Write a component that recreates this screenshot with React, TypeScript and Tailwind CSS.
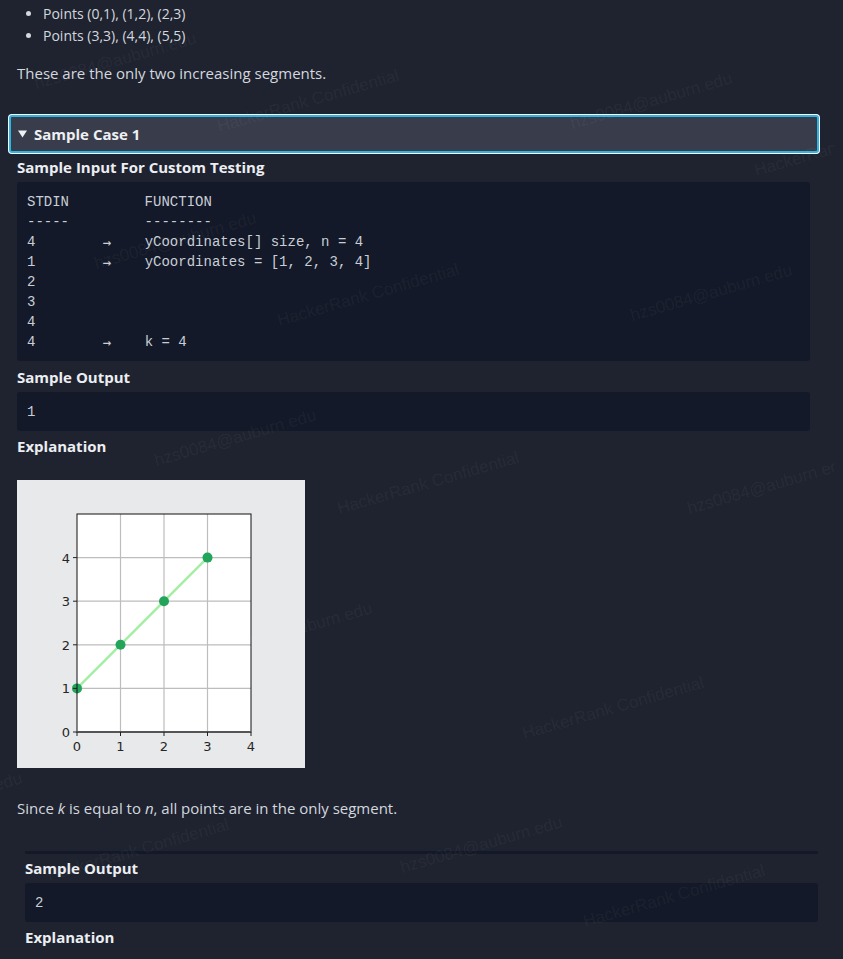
import React from "react";

function Plot() {
  const x0 = 60;
  const y0 = 252;
  const ux = 43.5;
  const uy = 43.6;
  const X = (v: number) => x0 + v * ux;
  const Y = (v: number) => y0 - v * uy;
  const pts = [
    [0, 1],
    [1, 2],
    [2, 3],
    [3, 4],
  ];
  return (
    <svg width="288" height="288" viewBox="0 0 288 288" className="block">
      <rect x="0" y="0" width="288" height="288" fill="#e8e9eb" />
      <rect x={X(0)} y={Y(5)} width={4 * ux} height={5 * uy} fill="#ffffff" />
      {[1, 2, 3].map((i) => (
        <line key={"gx" + i} x1={X(i)} y1={Y(0)} x2={X(i)} y2={Y(5)} stroke="#bdbdbd" strokeWidth="1.2" />
      ))}
      {[1, 2, 3, 4].map((j) => (
        <line key={"gy" + j} x1={X(0)} y1={Y(j)} x2={X(4)} y2={Y(j)} stroke="#bdbdbd" strokeWidth="1.2" />
      ))}
      <line x1={X(0)} y1={Y(1)} x2={X(3)} y2={Y(4)} stroke="#a3eea3" strokeWidth="2.4" />
      {pts.map(([a, b]) => (
        <circle key={"p" + a} cx={X(a)} cy={Y(b)} r="5" fill="#22a45a" />
      ))}
      <rect x={X(0)} y={Y(5)} width={4 * ux} height={5 * uy} fill="none" stroke="#111111" strokeWidth="1" />
      <line x1={X(0)} y1={Y(0)} x2={X(4)} y2={Y(0)} stroke="#555555" strokeWidth="1.8" />
      {[0, 1, 2, 3, 4].map((i) => (
        <g key={"tx" + i}>
          <line x1={X(i)} y1={Y(0)} x2={X(i)} y2={Y(0) + 4} stroke="#222" strokeWidth="1" />
          <text x={X(i)} y={Y(0) + 19} textAnchor="middle" fontFamily="DejaVu Sans, sans-serif" fontSize="13" fill="#262626">
            {i}
          </text>
        </g>
      ))}
      {[0, 1, 2, 3, 4].map((j) => (
        <g key={"ty" + j}>
          <line x1={X(0) - 4} y1={Y(j)} x2={X(0)} y2={Y(j)} stroke="#222" strokeWidth="1" />
          <text x={X(0) - 7} y={Y(j) + 5} textAnchor="end" fontFamily="DejaVu Sans, sans-serif" fontSize="13" fill="#262626">
            {j}
          </text>
        </g>
      ))}
    </svg>
  );
}

function Watermarks() {
  const wm =
    "absolute origin-bottom-left -rotate-[16deg] whitespace-nowrap font-['Liberation_Sans',Arial,sans-serif] text-[17px] leading-none text-white/[0.055]";
  const email = "hzs0084@auburn.edu";
  const conf = "HackerRank Confidential";
  return (
    <div className="pointer-events-none absolute left-0 top-0 h-full w-[834px] overflow-hidden">
      <span className={wm + " left-[37px] top-[75px]"}>{email}</span>
      <span className={wm + " left-[220px] top-[118px]"}>{conf}</span>
      <span className={wm + " left-[573px] top-[115px]"}>{email}</span>
      <span className={wm + " left-[757px] top-[162px]"}>{conf}</span>
      <span className={wm + " left-[97px] top-[255px]"}>{email}</span>
      <span className={wm + " left-[280px] top-[312px]"}>{conf}</span>
      <span className={wm + " left-[633px] top-[307px]"}>{email}</span>
      <span className={wm + " left-[157px] top-[452px]"}>{email}</span>
      <span className={wm + " left-[340px] top-[500px]"}>{conf}</span>
      <span className={wm + " left-[690px] top-[500px]"}>{email}</span>
      <span className={wm + " left-[213px] top-[645px]"}>{email}</span>
      <span className={wm + " left-[525px] top-[725px]"}>{conf}</span>
      <span className={wm + " left-[-137px] top-[815px]"}>{email}</span>
      <span className={wm + " left-[50px] top-[867px]"}>{conf}</span>
      <span className={wm + " left-[403px] top-[859px]"}>{email}</span>
      <span className={wm + " left-[586px] top-[913px]"}>{conf}</span>
    </div>
  );
}

const codeCls =
  "bg-[#131928] rounded-[3px] pt-[10px] pb-[9px] px-[10px] font-['Liberation_Mono','DejaVu_Sans_Mono',monospace] text-[14px] leading-[20px] text-[#c9ced6] whitespace-pre";

const headCls = "text-[15px] font-bold leading-[22px] text-[#eceef2]";

function Arrow() {
  return (
    <span className="inline-block h-[20px] align-top leading-[20px] font-['DejaVu_Sans_Mono',monospace]">{"\u2192"}</span>
  );
}

export default function App() {
  return (
    <div className="relative min-h-screen w-full overflow-hidden bg-[#1f2330] font-['Open_Sans',sans-serif] text-[#d3d7de]">
      <div className="w-[812px] ml-[8px] pt-[3px] pb-[12px] flex flex-col">
        <div className="px-[9px] flex flex-col gap-[15px]">
          <ul className="list-disc pl-[26px] text-[14px] leading-[22px]">
            <li>Points (0,1), (1,2), (2,3)</li>
            <li>Points (3,3), (4,4), (5,5)</li>
          </ul>
          <p className="text-[15px] leading-[22px]">These are the only two increasing segments.</p>
        </div>

        <div className="mt-[31px] mx-[1px] h-[38px] rounded-[3px] border-2 border-[#2bb6e3] ring-1 ring-white bg-[#393d4b] flex items-center pl-[7px] gap-[7px] text-[15px] font-bold text-[#eef0f3]">
          <svg width="9" height="8" viewBox="0 0 9 8">
            <path d="M0 0.5 L9 0.5 L4.5 7.5 Z" fill="#eef0f3" />
          </svg>
          <span>Sample Case 1</span>
        </div>

        <div className="pl-[9px] pr-[10px] pt-[3px] flex flex-col gap-[4px]">
          <h3 className={headCls}>Sample Input For Custom Testing</h3>
          <div className={codeCls}>
            {"STDIN         FUNCTION\n-----         --------\n4        "}
            <Arrow />
            {"    yCoordinates[] size, n = 4\n1        "}
            <Arrow />
            {"    yCoordinates = [1, 2, 3, 4]\n2\n3\n4\n4        "}
            <Arrow />
            {"    k = 4"}
          </div>
          <h3 className={headCls + " mt-[1px]"}>Sample Output</h3>
          <div className={codeCls}>1</div>
          <h3 className={headCls}>Explanation</h3>
          <div className="mt-[19px] w-[288px] h-[288px]">
            <Plot />
          </div>
          <p className="mt-[25px] text-[15px] leading-[22px]">
            Since <i>k</i> is equal to <i>n</i>, all points are in the only segment.
          </p>
        </div>

        <div className="mt-[32px] ml-[17px] mr-[2px] border-t-[3px] border-[#131928] pt-[3px] flex flex-col gap-[4px]">
          <h3 className={headCls}>Sample Output</h3>
          <div className={codeCls}>2</div>
          <h3 className={headCls}>Explanation</h3>
        </div>
      </div>
      <Watermarks />
    </div>
  );
}
